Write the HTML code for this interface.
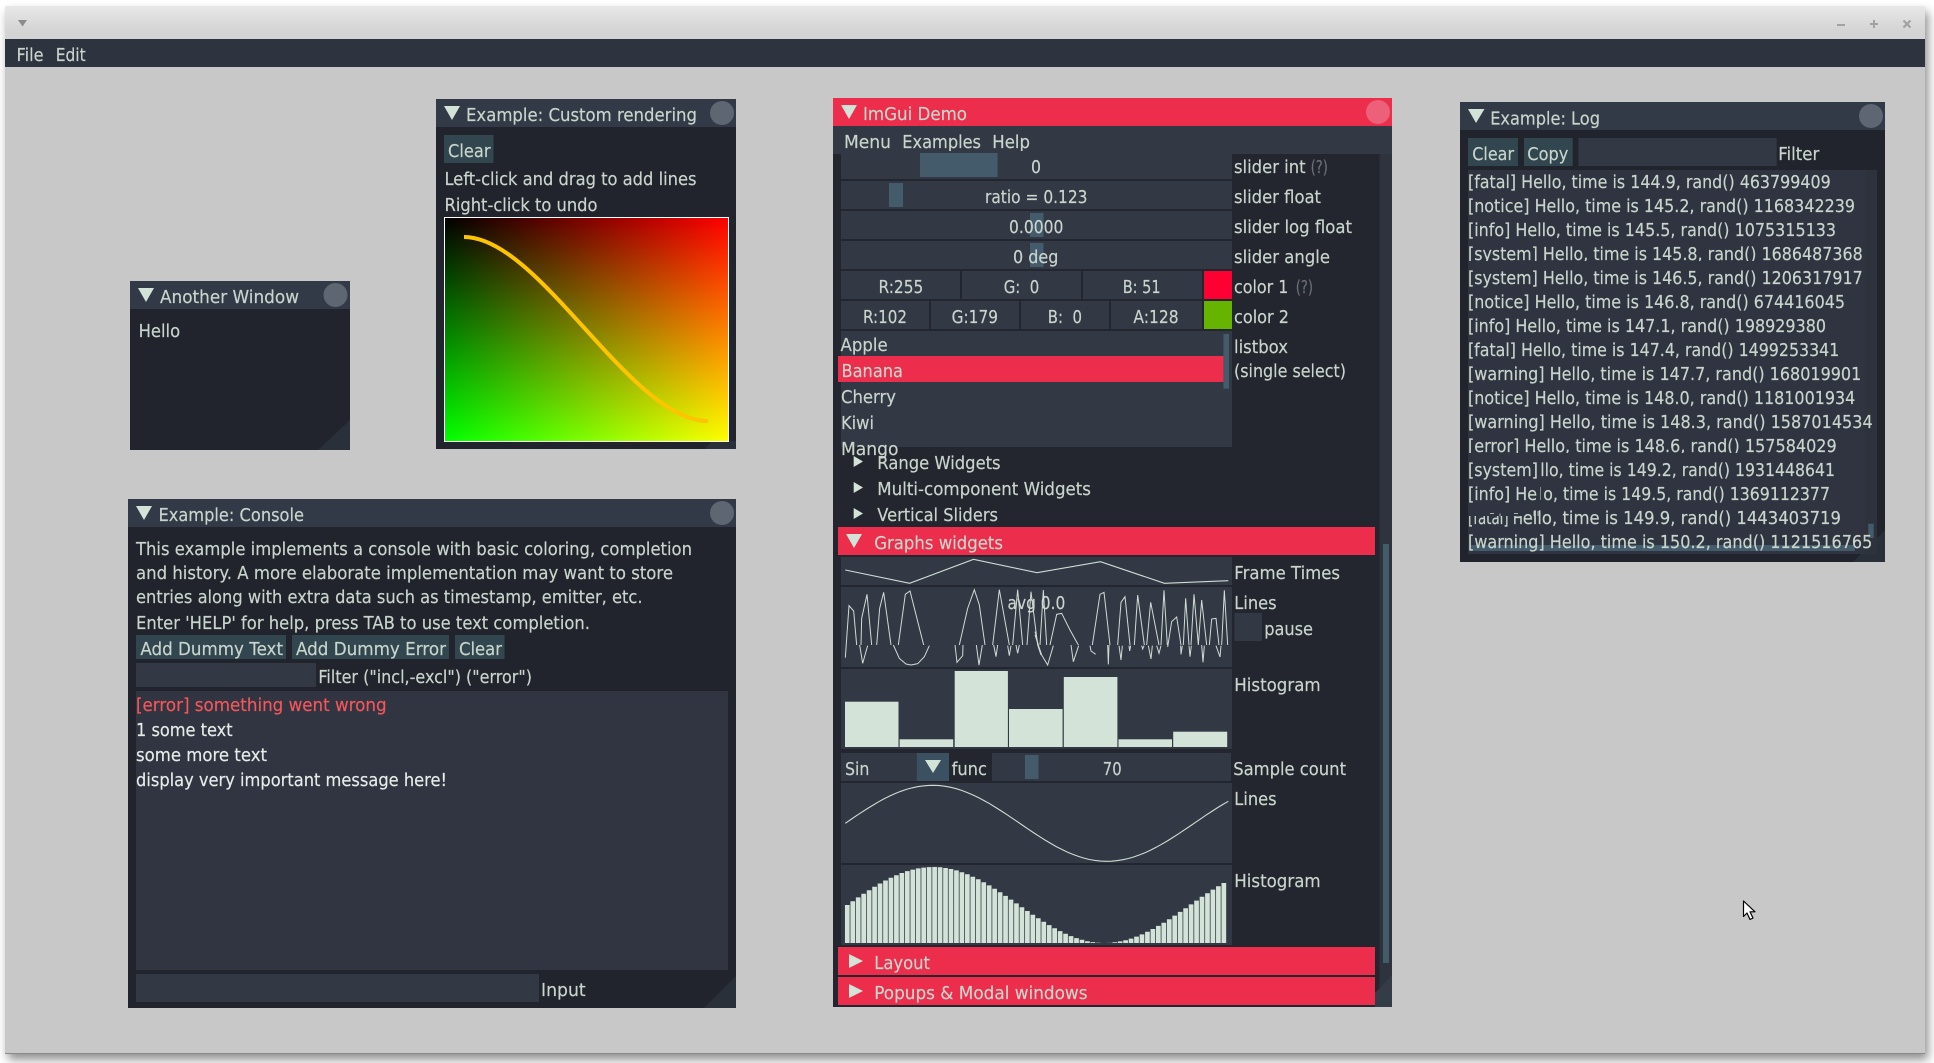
<!DOCTYPE html>
<html><head><meta charset="utf-8"><title>ImGui Demo</title>
<style>
html,body{margin:0;padding:0;background:#fff;width:1934px;height:1063px;overflow:hidden}
svg{display:block;filter:blur(.3px)}
text{font-family:"DejaVu Sans","Liberation Sans",sans-serif;font-size:18px;color:#c9d5cc;fill:currentColor;stroke:currentColor;stroke-width:.18;white-space:pre}
.b{color:#e6ece7}
.d{color:#6b7078}
.e{color:#f4565a}
.w{fill:#21242c}
.t{fill:#333a47}
.f{fill:#323844}
.g{fill:#445b6c}
.r{fill:#ed2d4c}
.u{fill:#32464f}
.c{fill:#5d6671}
.a{fill:#d3e3d8}
.l{fill:none;stroke:#cfdcd3;stroke-width:1.1}
.k{fill:#d3e3d8}
</style></head><body>
<svg xmlns="http://www.w3.org/2000/svg" width="1934" height="1063" viewBox="0 0 1934 1063">
<defs>
<linearGradient id="tb" x1="0" y1="0" x2="0" y2="1"><stop offset="0" stop-color="#e8e8e8"/><stop offset=".7" stop-color="#d5d5d5"/><stop offset="1" stop-color="#d4d4d4"/></linearGradient>
<linearGradient id="rg" x1="0" y1="0" x2="1" y2="0"><stop offset="0" stop-color="#000"/><stop offset="1" stop-color="#f00"/></linearGradient>
<linearGradient id="gg" x1="0" y1="0" x2="0" y2="1"><stop offset="0" stop-color="#000"/><stop offset="1" stop-color="#0f0"/></linearGradient>
<clipPath id="c4"><rect x="1460" y="240" width="420" height="21"/></clipPath>
<clipPath id="c12"><rect x="1460" y="432" width="420" height="21"/></clipPath>
<clipPath id="c15"><rect x="1460" y="516" width="70" height="11"/></clipPath>
</defs>

<!-- desktop window -->
<rect x="5" y="6" width="1920" height="1047.5" fill="#c8c8c8" style="filter:drop-shadow(3px 6px 5px rgba(0,0,0,.45))"/>
<rect x="5" y="6" width="1920" height="33" fill="url(#tb)"/>
<rect x="5" y="1053" width="1920" height="1" fill="#8a8a8a"/>
<polygon points="18,20 27,20 22.500,26.500" fill="#8c8c8c"/>
<rect x="1837" y="24" width="8" height="2" fill="#a2a2a2"/>
<path d="M1870 24h8M1874 20v8" stroke="#a2a2a2" stroke-width="2" fill="none"/>
<path d="M1903.500 20.500l7 7M1910.500 20.500l-7 7" stroke="#a2a2a2" stroke-width="2.200" fill="none"/>
<rect x="5" y="39" width="1920" height="28" fill="#2d333f"/>
<text x="16.500" y="61" textLength="27" lengthAdjust="spacingAndGlyphs">File</text>
<text x="55.700" y="61" textLength="30" lengthAdjust="spacingAndGlyphs">Edit</text>

<!-- Another Window -->
<rect class="w" x="130" y="281" width="220" height="169"/>
<rect class="t" x="130" y="281" width="220" height="28"/>
<polygon class="a" points="138,288 154,288 146,302"/>
<text x="160" y="303" textLength="139" lengthAdjust="spacingAndGlyphs">Another Window</text>
<circle class="c" cx="335.500" cy="295" r="12"/>
<text x="138.600" y="337" textLength="41.500" lengthAdjust="spacingAndGlyphs">Hello</text>
<polygon fill="#29303a" points="350,420 350,450 318,450"/>

<!-- Custom rendering -->
<rect class="w" x="436" y="99" width="300" height="350"/>
<rect class="t" x="436" y="99" width="300" height="28"/>
<polygon class="a" points="444,106 460,106 452,120"/>
<text x="466" y="121" textLength="231" lengthAdjust="spacingAndGlyphs">Example: Custom rendering</text>
<circle class="c" cx="722" cy="113" r="12"/>
<rect class="u" x="444" y="135" width="49.500" height="28"/>
<text x="448" y="157" textLength="42.500" lengthAdjust="spacingAndGlyphs">Clear</text>
<text x="444.500" y="185" textLength="252" lengthAdjust="spacingAndGlyphs">Left-click and drag to add lines</text>
<text x="444.500" y="211" textLength="153" lengthAdjust="spacingAndGlyphs">Right-click to undo</text>
<polygon fill="#29303a" points="736,441 736,449 705,449 712,441"/>
<rect x="444.500" y="217.500" width="284" height="224" fill="url(#rg)"/>
<rect x="444.500" y="217.500" width="284" height="224" fill="url(#gg)" style="mix-blend-mode:screen"/>
<rect x="444.500" y="217.500" width="284" height="224" fill="none" stroke="#fff" stroke-width="1"/>
<path d="M464 237C540 237 630 421 708 421" fill="none" stroke="#ffc400" stroke-width="4"/>

<!-- Console -->
<rect class="w" x="128" y="499" width="608" height="509"/>
<rect class="t" x="128" y="499" width="608" height="28"/>
<polygon class="a" points="136,506 152,506 144,520"/>
<text x="158.500" y="521" textLength="145.500" lengthAdjust="spacingAndGlyphs">Example: Console</text>
<circle class="c" cx="722" cy="513" r="12"/>
<text x="136" y="555" textLength="556" lengthAdjust="spacingAndGlyphs">This example implements a console with basic coloring, completion</text>
<text x="136" y="579" textLength="537" lengthAdjust="spacingAndGlyphs">and history. A more elaborate implementation may want to store</text>
<text x="136" y="603" textLength="506.500" lengthAdjust="spacingAndGlyphs">entries along with extra data such as timestamp, emitter, etc.</text>
<text x="136" y="629" textLength="454" lengthAdjust="spacingAndGlyphs">Enter 'HELP' for help, press TAB to use text completion.</text>
<rect class="u" x="136" y="635" width="150" height="24"/>
<rect class="u" x="292" y="635" width="157" height="24"/>
<rect class="u" x="455" y="635" width="49.500" height="24"/>
<text x="140.400" y="655" textLength="142.600" lengthAdjust="spacingAndGlyphs">Add Dummy Text</text>
<text x="296" y="655" textLength="150" lengthAdjust="spacingAndGlyphs">Add Dummy Error</text>
<text x="459" y="655" textLength="43" lengthAdjust="spacingAndGlyphs">Clear</text>
<rect class="f" x="136" y="663" width="180" height="24"/>
<text x="318.400" y="683" textLength="213.600" lengthAdjust="spacingAndGlyphs">Filter ("incl,-excl") ("error")</text>
<rect x="136" y="691" width="592" height="279" fill="#303541"/>
<text class="e" x="136" y="711" textLength="250.600" lengthAdjust="spacingAndGlyphs">[error] something went wrong</text>
<text class="b" x="136" y="736" textLength="96.600" lengthAdjust="spacingAndGlyphs">1 some text</text>
<text class="b" x="136" y="761" textLength="131" lengthAdjust="spacingAndGlyphs">some more text</text>
<text class="b" x="136" y="786" textLength="311" lengthAdjust="spacingAndGlyphs">display very important message here!</text>
<rect class="f" x="136" y="974" width="403" height="28"/>
<text x="541" y="996" textLength="44.700" lengthAdjust="spacingAndGlyphs">Input</text>
<polygon fill="#29303a" points="736,976 736,1008 704,1008"/>

<!-- ImGui Demo -->
<rect x="833" y="98" width="559" height="909" fill="#23262e"/>
<rect class="r" x="833" y="98" width="559" height="28"/>
<polygon class="a" points="841,105 857,105 849,119"/>
<text x="863" y="120" textLength="104" lengthAdjust="spacingAndGlyphs">ImGui Demo</text>
<circle cx="1378" cy="112" r="12" fill="#ec6079"/>
<rect class="f" x="833" y="126" width="559" height="28"/>
<text x="844" y="148" textLength="47" lengthAdjust="spacingAndGlyphs">Menu</text>
<text x="902.300" y="148" textLength="78.700" lengthAdjust="spacingAndGlyphs">Examples</text>
<text x="992.300" y="148" textLength="37.700" lengthAdjust="spacingAndGlyphs">Help</text>
<rect x="1379.500" y="154" width="12.500" height="853" fill="#2e333e"/>
<rect class="g" x="1383" y="544" width="6" height="419"/>
<polygon fill="#343c48" points="1392,975 1392,1007 1375,1007 1375,993"/>

<rect class="f" x="841" y="151" width="391" height="28"/>
<rect class="g" x="920" y="153" width="77.600" height="24"/>
<text x="1031" y="173" textLength="10" lengthAdjust="spacingAndGlyphs">0</text>
<rect class="f" x="841" y="181" width="391" height="28"/>
<rect class="g" x="889" y="183" width="14" height="24"/>
<text x="985" y="203" textLength="102.500" lengthAdjust="spacingAndGlyphs">ratio = 0.123</text>
<rect class="f" x="841" y="211" width="391" height="28"/>
<rect class="g" x="1030" y="213" width="13.500" height="24"/>
<text x="1009" y="233" textLength="54.400" lengthAdjust="spacingAndGlyphs">0.0000</text>
<rect class="f" x="841" y="241" width="391" height="28"/>
<rect class="g" x="1030" y="243" width="13.500" height="24"/>
<text x="1013" y="263" textLength="45.400" lengthAdjust="spacingAndGlyphs">0 deg</text>

<rect class="f" x="841" y="271" width="119" height="28"/>
<rect class="f" x="962" y="271" width="119" height="28"/>
<rect class="f" x="1083" y="271" width="119" height="28"/>
<rect x="1204" y="271" width="28" height="28" fill="#ff0033"/>
<text x="878.500" y="293" textLength="44.800" lengthAdjust="spacingAndGlyphs">R:255</text>
<text x="1003.700" y="293" textLength="35.600" lengthAdjust="spacingAndGlyphs">G:  0</text>
<text x="1122.700" y="293" textLength="37.900" lengthAdjust="spacingAndGlyphs">B: 51</text>

<rect class="f" x="841" y="301" width="88" height="28"/>
<rect class="f" x="931" y="301" width="88" height="28"/>
<rect class="f" x="1021" y="301" width="88" height="28"/>
<rect class="f" x="1111" y="301" width="91" height="28"/>
<rect x="1204" y="301" width="28" height="28" fill="#66b300"/>
<text x="863" y="323" textLength="44" lengthAdjust="spacingAndGlyphs">R:102</text>
<text x="951.600" y="323" textLength="46.400" lengthAdjust="spacingAndGlyphs">G:179</text>
<text x="1047.700" y="323" textLength="34.300" lengthAdjust="spacingAndGlyphs">B:  0</text>
<text x="1133.400" y="323" textLength="45.200" lengthAdjust="spacingAndGlyphs">A:128</text>

<text x="1234" y="173" textLength="71.600" lengthAdjust="spacingAndGlyphs">slider int</text>
<text class="d" x="1310.600" y="173" textLength="17.400" lengthAdjust="spacingAndGlyphs">(?)</text>
<text x="1234" y="203" textLength="87" lengthAdjust="spacingAndGlyphs">slider float</text>
<text x="1234" y="233" textLength="118" lengthAdjust="spacingAndGlyphs">slider log float</text>
<text x="1234" y="263" textLength="96" lengthAdjust="spacingAndGlyphs">slider angle</text>
<text x="1234" y="293" textLength="54.400" lengthAdjust="spacingAndGlyphs">color 1</text>
<text class="d" x="1295.700" y="293" textLength="17.300" lengthAdjust="spacingAndGlyphs">(?)</text>
<text x="1234" y="323" textLength="55" lengthAdjust="spacingAndGlyphs">color 2</text>

<rect class="f" x="841" y="331" width="391" height="116"/>
<rect class="g" x="1223.400" y="334" width="5.600" height="54.700"/>
<rect class="r" x="838" y="356" width="385.400" height="26"/>
<text x="840.500" y="351" textLength="47.200" lengthAdjust="spacingAndGlyphs">Apple</text>
<text x="841.500" y="377" textLength="61.500" lengthAdjust="spacingAndGlyphs">Banana</text>
<text x="841" y="403" textLength="55" lengthAdjust="spacingAndGlyphs">Cherry</text>
<text x="841" y="429" textLength="33" lengthAdjust="spacingAndGlyphs">Kiwi</text>
<text x="841" y="455" textLength="57.500" lengthAdjust="spacingAndGlyphs">Mango</text>
<text x="1234" y="353" textLength="54" lengthAdjust="spacingAndGlyphs">listbox</text>
<text x="1234" y="377" textLength="112" lengthAdjust="spacingAndGlyphs">(single select)</text>

<polygon class="a" points="853.700,456 863,461.500 853.700,467"/>
<text x="877.300" y="469" textLength="123.300" lengthAdjust="spacingAndGlyphs">Range Widgets</text>
<polygon class="a" points="853.700,482 863,487.500 853.700,493"/>
<text x="877.300" y="495" textLength="213.700" lengthAdjust="spacingAndGlyphs">Multi-component Widgets</text>
<polygon class="a" points="853.700,508 863,513.500 853.700,519"/>
<text x="877.300" y="521" textLength="120.700" lengthAdjust="spacingAndGlyphs">Vertical Sliders</text>

<rect class="r" x="838" y="527" width="537" height="28"/>
<polygon class="a" points="846,534 862,534 854,548"/>
<text x="874.200" y="549" textLength="128.800" lengthAdjust="spacingAndGlyphs">Graphs widgets</text>

<!-- frame times -->
<rect class="f" x="841" y="557" width="391" height="28"/>
<polyline class="l" points="845.300,570 909.600,583.300 973.500,559.300 1037,572.700 1100.500,561.700 1164.400,583.300 1228.300,580.700"/>
<text x="1234.300" y="579" textLength="105.700" lengthAdjust="spacingAndGlyphs">Frame Times</text>

<!-- lines -->
<rect class="f" x="841" y="587" width="391" height="80"/>
<text x="1007.500" y="609" textLength="57.800" lengthAdjust="spacingAndGlyphs">avg 0.0</text>
<g transform="translate(841,585) scale(.33333)" fill="none" stroke="#cfdcd3" stroke-width="3">
<path d="M13 218L24 62L38 78L47 180M60 180L62 100L78 28L92 180M56 180L65 235L80 182M107 180L116 70L128 22L150 180M157 180L175 220L195 237L210 240L230 236L250 215L265 182M172 180L193 28L207 18L248 180M342 180L348 232L365 212L366 180M355 180L380 70L400 14L415 60L432 180M406 180L414 240L424 180M455 180L475 14L505 180M458 180L465 215L470 180M500 182L505 212L510 182M515 180L530 14L545 180M525 180L530 205L535 180M558 180L570 20L590 180L600 210"/>
</g>
<g transform="translate(1035,585) scale(.33333)" fill="none" stroke="#cfdcd3" stroke-width="3">
<path d="M0 140L10 180M15 180L25 15L35 180M45 180L65 88L80 85L105 135L130 180M0 150L20 210L38 240L55 182M108 180L115 230L131 182M172 180L195 28L207 22L225 180M165 182L168 198L182 208M218 180L220 238L222 180M248 180L258 52L270 35L285 180M252 182L258 225L262 182M282 182L284 198L287 182M298 180L308 30L328 180M320 182L323 192L327 182M335 180L347 52L372 180M340 182L348 222L352 182M365 182L372 205L378 182M378 180L387 16L397 180M398 186L410 110L425 96L438 180M437 182L438 208L442 182M445 180L452 40L462 180M462 182L465 215L469 182M468 180L477 28L490 180M500 180L504 232L508 182M490 180L500 45L515 180M523 180L530 102L543 100L552 180M543 182L555 216L558 182M560 180L568 16L578 180"/>
</g>
<text x="1234.300" y="609" textLength="42.300" lengthAdjust="spacingAndGlyphs">Lines</text>
<rect class="f" x="1234.500" y="613" width="27.500" height="28"/>
<text x="1264.200" y="635" textLength="48.800" lengthAdjust="spacingAndGlyphs">pause</text>

<!-- histogram -->
<rect class="f" x="841" y="669" width="391" height="80"/>
<rect class="k" x="845" y="701.700" width="53.500" height="45.300"/>
<rect class="k" x="899.600" y="739.300" width="53.600" height="7.700"/>
<rect class="k" x="954.700" y="671" width="53.200" height="76"/>
<rect class="k" x="1009" y="709" width="53.600" height="38"/>
<rect class="k" x="1063.800" y="677" width="53.600" height="70"/>
<rect class="k" x="1118.500" y="739.300" width="53.500" height="7.700"/>
<rect class="k" x="1173.200" y="731.700" width="54" height="15.300"/>
<text x="1234.300" y="691" textLength="86.300" lengthAdjust="spacingAndGlyphs">Histogram</text>

<!-- combo and sample count -->
<rect class="f" x="841" y="753" width="108" height="28"/>
<rect fill="#3b5060" x="916.800" y="753" width="32.200" height="28"/>
<polygon class="a" points="925,760 941,760 933,773"/>
<text x="845" y="775" textLength="24.400" lengthAdjust="spacingAndGlyphs">Sin</text>
<text x="951.600" y="775" textLength="35.400" lengthAdjust="spacingAndGlyphs">func</text>
<rect class="f" x="992" y="753" width="239" height="28"/>
<rect class="g" x="1025" y="755" width="13.500" height="24"/>
<text x="1102.800" y="775" textLength="18.800" lengthAdjust="spacingAndGlyphs">70</text>
<text x="1233.200" y="775" textLength="112.800" lengthAdjust="spacingAndGlyphs">Sample count</text>

<!-- sine lines -->
<rect class="f" x="841" y="783" width="391" height="80"/>
<polyline transform="translate(845.300,-81.700) scale(5.551,1)" fill="none" stroke="#cfdcd3" stroke-width="1.100" vector-effect="non-scaling-stroke" points="0,905 1,901.200 2,897.400 3,893.800 4,890.200 5,886.800 6,883.500 7,880.500 8,877.700 9,875.200 10,873 11,871.100 12,869.600 13,868.400 14,867.600 15,867.100 16,867 17,867.300 18,868 19,869 20,870.400 21,872.200 22,874.300 23,876.700 24,879.300 25,882.300 26,885.400 27,888.800 28,892.300 29,895.900 30,899.600 31,903.400 32,907.200 33,911 34,914.700 35,918.300 36,921.800 37,925.100 38,928.300 39,931.100 40,933.800 41,936.100 42,938.100 43,939.800 44,941.200 45,942.100 46,942.800 47,943 48,942.900 49,942.300 50,941.400 51,940.200 52,938.600 53,936.600 54,934.400 55,931.800 56,929 57,925.900 58,922.700 59,919.200 60,915.600 61,911.900 62,908.200 63,904.400 64,900.600 65,896.800 66,893.200 67,889.600 68,886.200 69,883"/>
<text x="1234.300" y="805" textLength="42.300" lengthAdjust="spacingAndGlyphs">Lines</text>

<!-- sine histogram -->
<rect class="f" x="841" y="865" width="391" height="80"/>
<path transform="translate(847.300,0) scale(5.457,1)" fill="none" stroke="#d3e3d8" stroke-width=".86" d="M0 943V905M1 943V901.200M2 943V897.400M3 943V893.800M4 943V890.200M5 943V886.800M6 943V883.500M7 943V880.500M8 943V877.700M9 943V875.200M10 943V873M11 943V871.100M12 943V869.600M13 943V868.400M14 943V867.600M15 943V867.100M16 943V867M17 943V867.300M18 943V868M19 943V869M20 943V870.400M21 943V872.200M22 943V874.300M23 943V876.700M24 943V879.300M25 943V882.300M26 943V885.400M27 943V888.800M28 943V892.300M29 943V895.900M30 943V899.600M31 943V903.400M32 943V907.200M33 943V911M34 943V914.700M35 943V918.300M36 943V921.800M37 943V925.100M38 943V928.300M39 943V931.100M40 943V933.800M41 943V936.100M42 943V938.100M43 943V939.800M44 943V941.200M45 943V942.100M46 943V942.800M48 943V942.900M49 943V942.300M50 943V941.400M51 943V940.200M52 943V938.600M53 943V936.600M54 943V934.400M55 943V931.800M56 943V929M57 943V925.900M58 943V922.700M59 943V919.200M60 943V915.600M61 943V911.900M62 943V908.200M63 943V904.400M64 943V900.600M65 943V896.800M66 943V893.200M67 943V889.600M68 943V886.200M69 943V883"/>
<text x="1234.300" y="887" textLength="86.300" lengthAdjust="spacingAndGlyphs">Histogram</text>

<rect class="r" x="838" y="947" width="537" height="28"/>
<polygon class="a" points="849,954 863,961 849,968"/>
<text x="874.200" y="969" textLength="55.800" lengthAdjust="spacingAndGlyphs">Layout</text>
<rect class="r" x="838" y="977" width="537" height="28"/>
<polygon class="a" points="849,984 863,991 849,998"/>
<text x="874.200" y="999" textLength="213.300" lengthAdjust="spacingAndGlyphs">Popups &amp; Modal windows</text>

<!-- Log -->
<rect class="w" x="1460" y="102" width="425" height="460"/>
<rect class="t" x="1460" y="102" width="425" height="28"/>
<polygon class="a" points="1468,109 1484.500,109 1476,123"/>
<text x="1490.200" y="124.500" textLength="109.800" lengthAdjust="spacingAndGlyphs">Example: Log</text>
<circle class="c" cx="1871" cy="116" r="12"/>
<rect class="u" x="1468" y="138" width="50" height="28"/>
<text x="1472.300" y="160" textLength="41.700" lengthAdjust="spacingAndGlyphs">Clear</text>
<rect class="u" x="1524" y="138" width="48.700" height="28"/>
<text x="1527.300" y="160" textLength="41" lengthAdjust="spacingAndGlyphs">Copy</text>
<rect class="f" x="1578.300" y="138" width="198.400" height="28"/>
<text x="1778.200" y="160" textLength="41.100" lengthAdjust="spacingAndGlyphs">Filter</text>
<polygon fill="#29303a" points="1885,530 1885,562 1853,562"/>
<rect x="1468" y="170" width="397" height="384" fill="#2f3440"/>
<rect x="1865" y="170" width="12" height="384" fill="#2d323d"/>
<rect class="g" x="1868.300" y="523.700" width="5.400" height="14.300"/>
<rect class="g" x="1470" y="545" width="385" height="6"/>
<text x="1468" y="188" textLength="362.700" lengthAdjust="spacingAndGlyphs">[fatal] Hello, time is 144.9, rand() 463799409</text>
<text x="1468" y="212" textLength="387" lengthAdjust="spacingAndGlyphs">[notice] Hello, time is 145.2, rand() 1168342239</text>
<text x="1468" y="236" textLength="368" lengthAdjust="spacingAndGlyphs">[info] Hello, time is 145.5, rand() 1075315133</text>
<text clip-path="url(#c4)" x="1468" y="260" textLength="394.700" lengthAdjust="spacingAndGlyphs">[system] Hello, time is 145.8, rand() 1686487368</text>
<text x="1468" y="284" textLength="394.700" lengthAdjust="spacingAndGlyphs">[system] Hello, time is 146.5, rand() 1206317917</text>
<text x="1468" y="308" textLength="377" lengthAdjust="spacingAndGlyphs">[notice] Hello, time is 146.8, rand() 674416045</text>
<text x="1468" y="332" textLength="358" lengthAdjust="spacingAndGlyphs">[info] Hello, time is 147.1, rand() 198929380</text>
<text x="1468" y="356" textLength="371.300" lengthAdjust="spacingAndGlyphs">[fatal] Hello, time is 147.4, rand() 1499253341</text>
<text x="1468" y="380" textLength="393.300" lengthAdjust="spacingAndGlyphs">[warning] Hello, time is 147.7, rand() 168019901</text>
<text x="1468" y="404" textLength="387.300" lengthAdjust="spacingAndGlyphs">[notice] Hello, time is 148.0, rand() 1181001934</text>
<text x="1468" y="428" textLength="404.700" lengthAdjust="spacingAndGlyphs">[warning] Hello, time is 148.3, rand() 1587014534</text>
<text clip-path="url(#c12)" x="1468" y="452" textLength="368.700" lengthAdjust="spacingAndGlyphs">[error] Hello, time is 148.6, rand() 157584029</text>
<text x="1468" y="476" textLength="70" lengthAdjust="spacingAndGlyphs">[system]</text>
<text x="1540.300" y="476" textLength="294.700" lengthAdjust="spacingAndGlyphs">llo, time is 149.2, rand() 1931448641</text>
<text x="1468" y="500" textLength="69" lengthAdjust="spacingAndGlyphs">[info] He</text>
<rect x="1540" y="487" width="1" height="13" fill="#7f8a88"/>
<text x="1543.300" y="500" textLength="286.700" lengthAdjust="spacingAndGlyphs">o, time is 149.5, rand() 1369112377</text>
<text clip-path="url(#c15)" x="1468" y="524" textLength="55" lengthAdjust="spacingAndGlyphs">[fatal] H</text>
<path d="M1490 513.500h4M1500 513.500v3M1514 513.500h4M1534 511v5M1538 511v5" stroke="#aab5ae" stroke-width="1" fill="none"/>
<text x="1522.700" y="524" textLength="318.300" lengthAdjust="spacingAndGlyphs">ello, time is 149.9, rand() 1443403719</text>
<text x="1468" y="548" textLength="404.300" lengthAdjust="spacingAndGlyphs">[warning] Hello, time is 150.2, rand() 1121516765</text>

<!-- cursor -->
<path d="M1743.500 901V916.500L1747 913L1750 919.500L1753 918L1750 911.800H1755Z" fill="#fff" stroke="#000" stroke-width="1.200" stroke-linejoin="round"/>
</svg>
</body></html>
